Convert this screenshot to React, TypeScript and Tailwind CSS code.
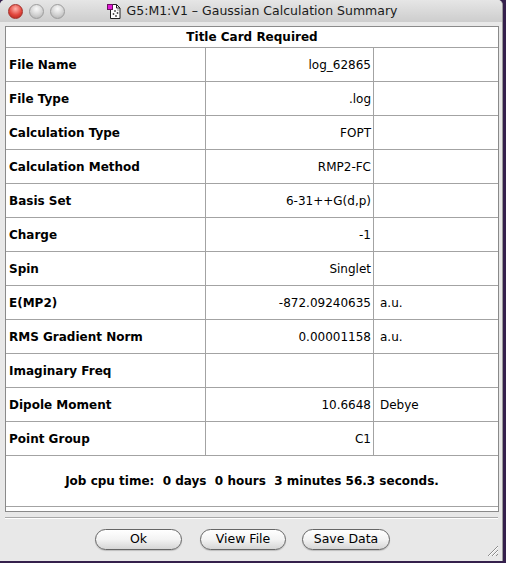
import React from "react";

const rows: [string, string, string][] = [
  ["File Name", "log_62865", ""],
  ["File Type", ".log", ""],
  ["Calculation Type", "FOPT", ""],
  ["Calculation Method", "RMP2-FC", ""],
  ["Basis Set", "6-31++G(d,p)", ""],
  ["Charge", "-1", ""],
  ["Spin", "Singlet", ""],
  ["E(MP2)", "-872.09240635", "a.u."],
  ["RMS Gradient Norm", "0.00001158", "a.u."],
  ["Imaginary Freq", "", ""],
  ["Dipole Moment", "10.6648", "Debye"],
  ["Point Group", "C1", ""],
];

function DocIcon() {
  return (
    <svg width="16" height="17" viewBox="0 0 16 17">
      <path d="M3.5 1.5h6l3.5 3.5v10.5h-9.5z" fill="#fff" stroke="#222" strokeWidth="1" />
      <path d="M9.5 1.5v3.5h3.5" fill="none" stroke="#222" strokeWidth="1" />
      <rect x="0.5" y="1.5" width="5" height="5" fill="#e21ad6" stroke="#6a1060" strokeWidth="1" />
      <circle cx="8" cy="8" r="0.9" fill="#444" />
      <circle cx="10.5" cy="10" r="0.9" fill="#444" />
      <circle cx="6.5" cy="11" r="0.9" fill="#444" />
      <circle cx="9" cy="13" r="0.9" fill="#444" />
      <circle cx="11" cy="7" r="0.7" fill="#777" />
    </svg>
  );
}

function TitleBar() {
  return (
    <div className="relative h-[22px] shrink-0 flex items-center justify-center bg-gradient-to-b from-[#e6e6e6] to-[#cdcdcd]">
      <div className="absolute left-[8px] top-[4px] flex gap-[6px]">
        <span className="w-[15px] h-[15px] rounded-full border border-[#a3302a] bg-[radial-gradient(circle_at_50%_30%,#ffb3ab,#e2463d_55%,#a8231a)]" />
        <span className="w-[15px] h-[15px] rounded-full border border-[#9c9c9c] bg-[radial-gradient(circle_at_50%_30%,#fafafa,#d2d2d2_55%,#ababab)]" />
        <span className="w-[15px] h-[15px] rounded-full border border-[#9c9c9c] bg-[radial-gradient(circle_at_50%_30%,#fafafa,#d2d2d2_55%,#ababab)]" />
      </div>
      <div className="flex items-center gap-[4px] pl-[2px]">
        <DocIcon />
        <span className="text-[12.5px] text-[#1a1a1a] leading-none">G5:M1:V1 – Gaussian Calculation Summary</span>
      </div>
    </div>
  );
}

function AquaButton({ label, width }: { label: string; width: string }) {
  return (
    <button
      className={`${width} h-[21px] rounded-full border border-[#666666] bg-gradient-to-b from-white via-[#f3f3f3] to-[#d6d6d6] shadow-[0_1px_1px_rgba(0,0,0,0.18)] text-[12.5px] text-black leading-none flex items-center justify-center`}
    >
      {label}
    </button>
  );
}

export default function App() {
  return (
    <div className="w-[506px] h-[563px] bg-[#35204c] font-['DejaVu_Sans','Liberation_Sans',sans-serif]">
      <div className="relative w-[503px] h-[561px] bg-[#e8e8e8] flex flex-col rounded-t-[5px] overflow-hidden border-r border-[#9a9a9a]">
        <TitleBar />

        <div className="pt-[4px] pl-[5px]">
          <div className="w-[494px] border border-[#8a8a8a] bg-white">
            <div className="h-[21px] border-b border-[#a3a3a3] flex items-center justify-center text-[12px] font-bold text-black">
              Title Card Required
            </div>
            {rows.map(([label, value, unit]) => (
              <div key={label} className="h-[34px] border-b border-[#a3a3a3] grid grid-cols-[200px_168px_1fr] text-[12px] text-black">
                <div className="border-r border-[#a3a3a3] flex items-center pl-[3px] font-bold">{label}</div>
                <div className="border-r border-[#a3a3a3] flex items-center justify-end pr-[2px]">{value}</div>
                <div className="flex items-center pl-[6px]">{unit}</div>
              </div>
            ))}
            <div className="h-[51px] border-b border-[#a3a3a3] flex items-center justify-center text-[12px] font-bold text-black whitespace-pre">
              {"Job cpu time:  0 days  0 hours  3 minutes 56.3 seconds."}
            </div>
            <div className="h-[4px]" />
          </div>
        </div>

        <div className="mt-[5px] ml-[5px] w-[493px] h-[2px] border-t border-[#a8a8a8] border-b border-b-white" />

        <div className="mt-[10px] pl-[95px] flex">
          <AquaButton label="Ok" width="w-[87px]" />
          <div className="ml-[18px]">
            <AquaButton label="View File" width="w-[86px]" />
          </div>
          <div className="ml-[16px]">
            <AquaButton label="Save Data" width="w-[88px]" />
          </div>
        </div>

        <svg className="absolute right-[3px] bottom-[4px]" width="14" height="14" viewBox="0 0 14 14">
          <path d="M13 3L3 13M13 7L7 13M13 11L11 13" stroke="#8c8c8c" strokeWidth="1" />
          <path d="M13 4L4 13M13 8L8 13" stroke="#ffffff" strokeWidth="1" />
        </svg>
      </div>
    </div>
  );
}
